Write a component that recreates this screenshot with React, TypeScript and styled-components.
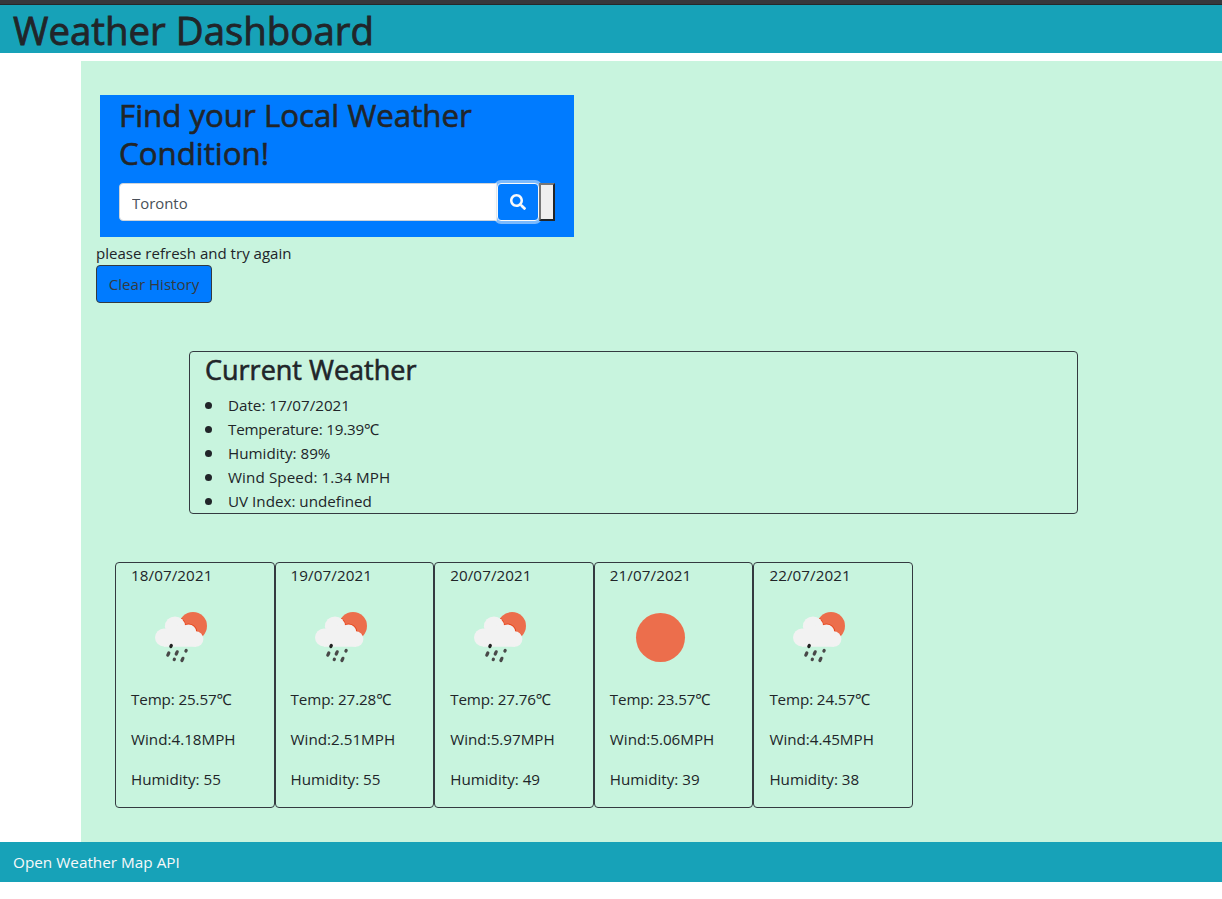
import React from 'react';
import styled, { createGlobalStyle } from 'styled-components';
import { FaSearch } from 'react-icons/fa';

const GlobalStyle = createGlobalStyle`
  *, *::before, *::after { box-sizing: border-box; }
  body {
    margin: 0;
    background: #fff;
    color: #212529;
    font-family: 'Open Sans', 'Noto Sans', sans-serif;
    font-size: 15.2px;
    line-height: 24px;
  }
  h1, h2, h3, p, ul { margin: 0; padding: 0; font-weight: 400; }
  h1, h2, h3 { -webkit-text-stroke: 0.6px currentColor; }
`;

const Header = styled.header`
  height: 53px;
  padding-left: 13px;
  margin-bottom: 8px;
  border-top: 4px solid #37383c;
  background: #17a2b8;
  box-shadow: inset 0 1px 0 #27282a;
`;

const PageTitle = styled.h1`
  padding-top: 1px;
  font-size: 38.4px;
  line-height: 51px;
  white-space: nowrap;
  -webkit-text-stroke-width: 0.8px;
`;

const Main = styled.main`
  margin-left: 81px;
  height: 781px;
  padding: 34px 0 0 15px;
  background: #c8f4de;
`;

const SearchPanel = styled.section`
  width: 474px;
  height: 142px;
  margin-left: 4px;
  padding: 0 19px;
  background: #007bff;
`;

const SearchTitle = styled.h2`
  height: 88px;
  font-size: 31.25px;
  line-height: 38.4px;
  padding-top: 1px;
  white-space: nowrap;
`;

const SearchRow = styled.form`
  display: flex;
  height: 38px;
`;

const CityInput = styled.input`
  flex: 1;
  min-width: 0;
  padding: 1px 12px 0;
  border: 1px solid #ced4da;
  border-radius: 4px 0 0 4px;
  background: #fff;
  color: #495057;
  font: inherit;
  font-size: 14.9px;
  outline: none;
`;

const SearchButton = styled.button`
  display: flex;
  align-items: center;
  justify-content: center;
  width: 42px;
  padding: 0;
  border: 1px solid #f8f9fa;
  border-radius: 4px;
  background: #007bff;
  color: #f8f9fa;
  box-shadow: 0 0 0 3px rgba(248, 249, 250, 0.5);
`;

const BlankButton = styled.button`
  position: relative;
  width: 16px;
  padding: 0;
  border: 2px solid;
  border-color: #767676 #212529 #212529 #767676;
  background: #efefef;
`;

const Notice = styled.p`
  margin-top: 4px;
  height: 24px;
  font-size: 15.05px;
`;

const ClearButton = styled.button`
  display: block;
  width: 116px;
  height: 38px;
  padding: 0 0 1px;
  border: 1px solid #343a40;
  border-radius: 4px;
  background: #007bff;
  color: #343a40;
  font: inherit;
  font-size: 15.1px;
  white-space: nowrap;
`;

const CurrentCard = styled.section`
  width: 889px;
  height: 163px;
  margin: 48px 0 0 93px;
  padding: 0 15px;
  border: 1px solid #343a40;
  border-radius: 4px;
`;

const CurrentTitle = styled.h3`
  height: 41px;
  font-size: 27px;
  line-height: 36px;
  white-space: nowrap;
`;

const Readings = styled.ul`
  list-style: none;
`;

const Reading = styled.li<{ $spacing?: number }>`
  display: flex;
  align-items: center;
  letter-spacing: ${({ $spacing = 0 }) => $spacing}px;

  &::before {
    content: '';
    width: 7px;
    height: 7px;
    margin: 0 16px 0 0;
    border-radius: 50%;
    background: #212529;
  }
`;

const Forecast = styled.section`
  display: flex;
  width: 798px;
  margin: 48px 0 0 19px;
`;

const DayCard = styled.article`
  flex: 1;
  height: 246px;
  padding: 0 15px;
  border: 1px solid #343a40;
  border-radius: 4px;
  white-space: nowrap;
`;

const DayDate = styled.p`
  letter-spacing: 0.08px;
`;

const WeatherIcon = styled.svg`
  display: block;
  width: 100px;
  height: 100px;
`;

const DayStat = styled.p<{ $spacing?: number }>`
  margin-bottom: 16px;
  letter-spacing: ${({ $spacing = 0 }) => $spacing}px;
`;

const Footer = styled.footer`
  height: 40px;
  padding-left: 13px;
  background: #17a2b8;
  color: #f8f9fa;
  font-size: 15.3px;
  line-height: 41px;
`;

const RainIcon = ({ id }: { id: string }) => (
  <WeatherIcon viewBox="0 0 100 100">
    <clipPath id={id}>
      <circle cx="62" cy="39" r="14" />
    </clipPath>
    <circle cx="62" cy="39" r="14" fill="#ec6e4c" />
    <g fill="#e8451c" clipPath={`url(#${id})`}>
      <circle cx="44" cy="39.5" r="10.8" />
      <circle cx="57.5" cy="45.3" r="8.8" />
      <circle cx="64.7" cy="53" r="8.8" />
    </g>
    <g fill="#f2f2f2">
      <circle cx="44" cy="39.5" r="10.1" />
      <circle cx="33" cy="50.5" r="9" />
      <circle cx="57.5" cy="45.3" r="7.9" />
      <circle cx="64.7" cy="52" r="7.7" />
      <path d="M33 43L44 38L57 43L65 51V59.7H33Z" />
    </g>
    <g stroke="#484848" strokeWidth="3.2" strokeLinecap="round">
      <path d="M39.8 59.5l.5-1" stroke="#222" />
      <path d="M36.8 68.2l1-2.2M45.2 67l1-2.2M50.9 73.5l1-2.2M54.9 64l.3-.6M43.2 72.6l.2-.4" />
    </g>
  </WeatherIcon>
);

const SunIcon = () => (
  <WeatherIcon viewBox="0 0 100 100">
    <circle cx="50.5" cy="50.5" r="24.5" fill="#ec6e4c" />
  </WeatherIcon>
);

const readings = [
  { text: 'Date: 17/07/2021' },
  { text: 'Temperature: 19.39℃', spacing: -0.2 },
  { text: 'Humidity: 89%' },
  { text: 'Wind Speed: 1.34 MPH', spacing: 0.1 },
  { text: 'UV Index: undefined' },
];

const days = [
  { date: '18/07/2021', sunny: false, temp: '25.57', wind: '4.18', humidity: 55 },
  { date: '19/07/2021', sunny: false, temp: '27.28', wind: '2.51', humidity: 55 },
  { date: '20/07/2021', sunny: false, temp: '27.76', wind: '5.97', humidity: 49 },
  { date: '21/07/2021', sunny: true, temp: '23.57', wind: '5.06', humidity: 39 },
  { date: '22/07/2021', sunny: false, temp: '24.57', wind: '4.45', humidity: 38 },
];

export default function App() {
  return (
    <>
      <GlobalStyle />
      <Header>
        <PageTitle>Weather Dashboard</PageTitle>
      </Header>
      <Main>
        <SearchPanel>
          <SearchTitle>
            Find your Local Weather
            <br />
            Condition!
          </SearchTitle>
          <SearchRow onSubmit={(e) => e.preventDefault()}>
            <CityInput defaultValue="Toronto" />
            <SearchButton type="button" aria-label="Search">
              <FaSearch size={16} />
            </SearchButton>
            <BlankButton type="button" />
          </SearchRow>
        </SearchPanel>
        <Notice>please refresh and try again</Notice>
        <ClearButton type="button">Clear History</ClearButton>
        <CurrentCard>
          <CurrentTitle>Current Weather</CurrentTitle>
          <Readings>
            {readings.map(({ text, spacing }) => (
              <Reading key={text} $spacing={spacing}>
                {text}
              </Reading>
            ))}
          </Readings>
        </CurrentCard>
        <Forecast>
          {days.map((day, i) => (
            <DayCard key={day.date}>
              <DayDate>{day.date}</DayDate>
              {day.sunny ? <SunIcon /> : <RainIcon id={`sun-${i}`} />}
              <DayStat $spacing={-0.12}>{`Temp: ${day.temp}℃`}</DayStat>
              <DayStat>{`Wind:${day.wind}MPH`}</DayStat>
              <DayStat>{`Humidity: ${day.humidity}`}</DayStat>
            </DayCard>
          ))}
        </Forecast>
      </Main>
      <Footer>Open Weather Map API</Footer>
    </>
  );
}
